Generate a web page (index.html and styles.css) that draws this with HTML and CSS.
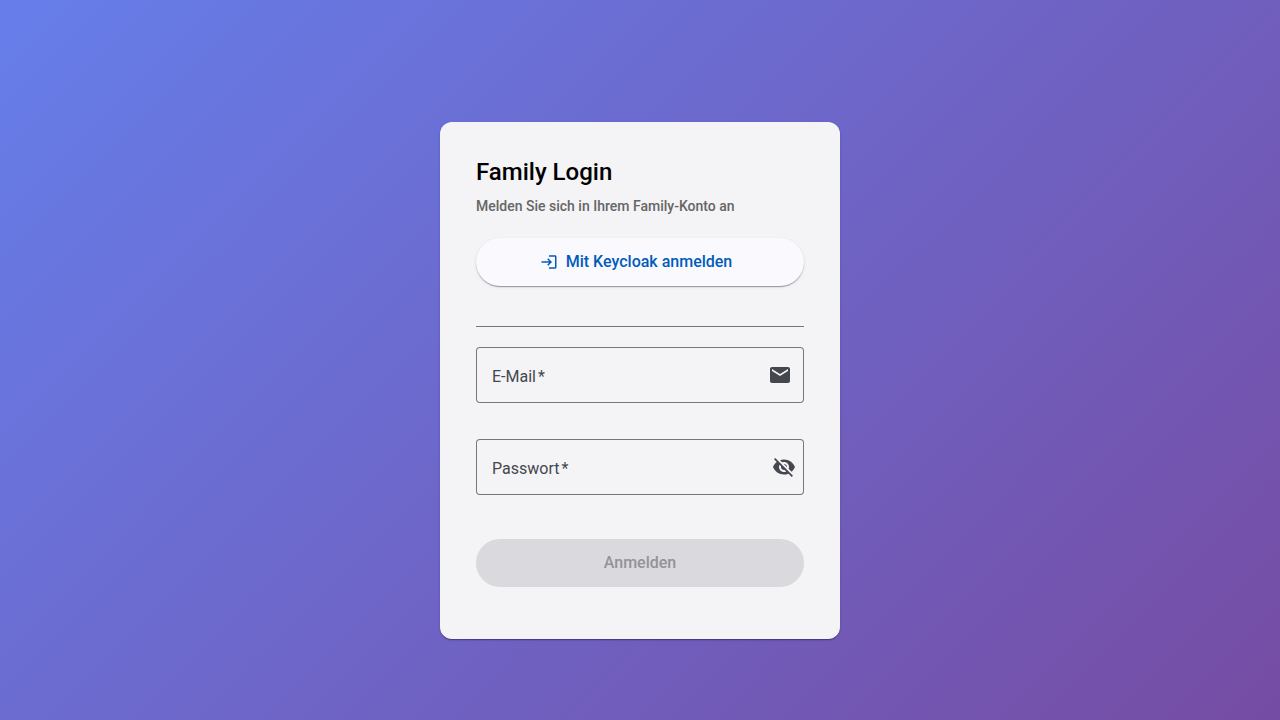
FILE: index.html
```html
<!DOCTYPE html>
<html lang="de">
<head>
<meta charset="utf-8">
<title>Family Login</title>
<link rel="stylesheet" href="styles.css">
</head>
<body>
<main class="page">
  <section class="card">
    <header class="card-header">
      <h1 class="title">Family Login</h1>
      <p class="subtitle">Melden Sie sich in Ihrem Family-Konto an</p>
    </header>
    <button class="button button-raised" type="button">
      <svg class="icon-small" viewBox="0 0 24 24" aria-hidden="true"><path d="M11 7 9.600 8.400l2.600 2.600H2v2h10.200l-2.600 2.600L11 17l5-5-5-5zm9 12h-8v2h8c1.100 0 2-.9 2-2V5c0-1.100-.9-2-2-2h-8v2h8v14z"/></svg>
      <span>Mit Keycloak anmelden</span>
    </button>
    <hr class="divider">
    <form class="form">
      <div class="field">
        <input class="input" id="email" type="email" placeholder=" " required>
        <label class="label" for="email">E-Mail<span class="required">*</span></label>
        <svg class="icon" viewBox="0 0 24 24" aria-hidden="true"><path d="M20 4H4c-1.100 0-1.990.9-1.990 2L2 18c0 1.100.9 2 2 2h16c1.100 0 2-.9 2-2V6c0-1.100-.9-2-2-2zm0 4-8 5-8-5V6l8 5 8-5v2z"/></svg>
      </div>
      <div class="field field-password">
        <input class="input" id="password" type="password" placeholder=" " required>
        <label class="label" for="password">Passwort<span class="required">*</span></label>
        <button class="toggle" type="button" aria-label="Passwort anzeigen">
          <svg class="icon" viewBox="0 0 24 24" aria-hidden="true"><path d="M12 7c2.760 0 5 2.240 5 5 0 .65-.13 1.260-.36 1.830l2.920 2.920c1.510-1.260 2.700-2.890 3.430-4.750-1.730-4.390-6-7.500-11-7.500-1.400 0-2.740.25-3.980.7l2.160 2.160C10.740 7.130 11.350 7 12 7zM2 4.270l2.280 2.280.46.46C3.080 8.300 1.780 10.020 1 12c1.730 4.390 6 7.500 11 7.500 1.550 0 3.030-.3 4.380-.84l.42.42L19.730 22 21 20.730 3.270 3 2 4.270zM7.530 9.800l1.550 1.550c-.05.21-.08.43-.08.65 0 1.660 1.340 3 3 3 .22 0 .44-.03.65-.08l1.550 1.550c-.67.33-1.410.53-2.200.53-2.760 0-5-2.240-5-5 0-.79.2-1.530.53-2.200zm4.310-.78 3.150 3.150.02-.16c0-1.660-1.340-3-3-3l-.17.01z"/></svg>
        </button>
      </div>
      <button class="button button-submit" type="submit" disabled>Anmelden</button>
    </form>
  </section>
</main>
</body>
</html>
```
FILE: styles.css
```css
body {
  margin: 0;
  font-family: Roboto, "Liberation Sans", sans-serif;
  color: #1a1b1f;
}

.page {
  display: flex;
  align-items: center;
  justify-content: center;
  min-height: 100vh;
  padding: 20px;
  background: linear-gradient(135deg, #667eea 0%, #764ba2 100%);
}

.card {
  box-sizing: border-box;
  width: 100%;
  max-width: 400px;
  padding: 36px 36px 52px;
  margin-top: 1px;
  border-radius: 12px;
  background: #f4f3f6;
  box-shadow: 0 2px 1px -1px rgba(0, 0, 0, 0.2), 0 1px 1px rgba(0, 0, 0, 0.14), 0 1px 3px rgba(0, 0, 0, 0.12);
}

.card-header {
  margin-bottom: 20px;
}

.title {
  margin: 0 0 8px;
  font-size: 24px;
  font-weight: 500;
  line-height: 28px;
  color: #000;
}

.subtitle {
  margin: 0;
  font-size: 14px;
  font-weight: 500;
  line-height: 24px;
  color: #666;
}

.button {
  display: flex;
  box-sizing: border-box;
  align-items: center;
  justify-content: center;
  gap: 8px;
  width: 100%;
  height: 48px;
  padding: 0 24px;
  border: 0;
  border-radius: 24px;
  font: 500 16px/24px Roboto, "Liberation Sans", sans-serif;
}

.button-raised {
  padding-left: 16px;
  background: #faf9fd;
  color: #005cbb;
  box-shadow: 0 2px 1px -1px rgba(0, 0, 0, 0.2), 0 1px 1px rgba(0, 0, 0, 0.14), 0 1px 3px rgba(0, 0, 0, 0.12);
}

.button-submit {
  margin-top: 8px;
  background: #dad9dd;
  color: #949397;
}

.icon-small {
  width: 18px;
  height: 18px;
  fill: currentColor;
}

.icon {
  display: block;
  width: 24px;
  height: 24px;
  fill: currentColor;
}

.divider {
  margin: 40px 0 20px;
  border: 0;
  border-top: 1px solid #74777f;
}

.form {
  display: flex;
  flex-direction: column;
  gap: 36px;
}

.field {
  position: relative;
  display: flex;
  align-items: center;
  height: 56px;
  padding: 0 12px 0 16px;
  border-radius: 4px;
  box-shadow: inset 0 0 0 1px #74777f;
  color: #44474e;
}

.field-password {
  padding-right: 0;
}

.input {
  flex: 1;
  min-width: 0;
  padding: 0;
  border: 0;
  outline: 0;
  background: transparent;
  font: 400 16px/24px Roboto, "Liberation Sans", sans-serif;
}

.label {
  position: absolute;
  top: 18px;
  left: 16px;
  font-size: 16px;
  line-height: 24px;
  pointer-events: none;
}

.required {
  margin-left: 2px;
}

.input:focus + .label,
.input:not(:placeholder-shown) + .label {
  top: -12px;
  padding: 0 4px;
  background: #f4f3f6;
  font-size: 12px;
}

.toggle {
  padding: 8px;
  border: 0;
  background: transparent;
  color: inherit;
}
```
